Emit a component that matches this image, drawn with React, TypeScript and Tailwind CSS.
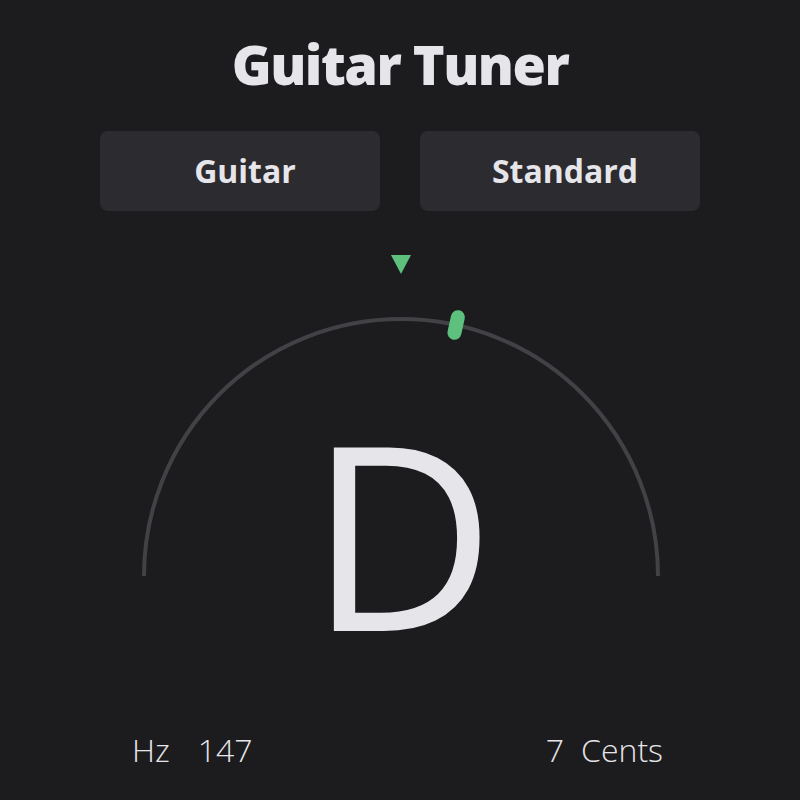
import React from 'react'

const font = { fontFamily: '"Open Sans", "Liberation Sans", sans-serif' }

function Gauge({ cents }: { cents: number }) {
  // needle angle in degrees from vertical; ~1.77 deg per cent
  const angle = cents * 1.77
  const cx = 401
  const cy = 335
  const r = 257
  const rad = (angle * Math.PI) / 180
  const nx = cx + r * Math.sin(rad)
  const ny = cy - r * Math.cos(rad)

  return (
    <svg className="absolute inset-0" width="800" height="420" viewBox="0 0 800 420">
      <polygon points="391,14 411,14 401,33" fill="#5dc07d" />
      <path
        d={`M ${cx - r} ${cy} A ${r} ${r} 0 0 1 ${cx + r} ${cy}`}
        fill="none"
        stroke="#424145"
        strokeWidth="4"
      />
      <rect
        x="-7"
        y="-15"
        width="14"
        height="30"
        rx="7"
        fill="#5dc07d"
        transform={`translate(${nx} ${ny}) rotate(${angle})`}
      />
    </svg>
  )
}

export default function App() {
  const note = 'D'
  const hz = 147
  const cents = 7

  return (
    <div className="w-[800px] h-[800px] bg-[#1c1b1e] text-[#e6e5e9] overflow-hidden" style={font}>
      {/* Title */}
      <h1 className="pt-[37px] text-center text-[54px] font-extrabold leading-none tracking-[-1.5px]">
        Guitar Tuner
      </h1>

      {/* Selectors */}
      <div className="mt-[40px] flex justify-center gap-[40px]">
        {['Guitar', 'Standard'].map((label) => (
          <button
            key={label}
            className="w-[280px] h-[80px] rounded-lg bg-[#2c2b2f] pl-[10px] text-[32px] font-bold leading-none text-[#e6e5e9]"
          >
            {label}
          </button>
        ))}
      </div>

      {/* Gauge */}
      <div className="relative mt-[30px] h-[420px]">
        <Gauge cents={cents} />
        <div className="relative pt-[162px] pl-[4px] text-center text-[257px] leading-none">{note}</div>
      </div>

      {/* Readouts */}
      <div className="mt-[73px] flex justify-between pl-[132px] pr-[137px] text-[32px] font-light leading-none">
        <div className="flex gap-[28px]">
          <span>Hz</span>
          <span>{hz}</span>
        </div>
        <div className="flex gap-[17px]">
          <span>{cents}</span>
          <span>Cents</span>
        </div>
      </div>
    </div>
  )
}
